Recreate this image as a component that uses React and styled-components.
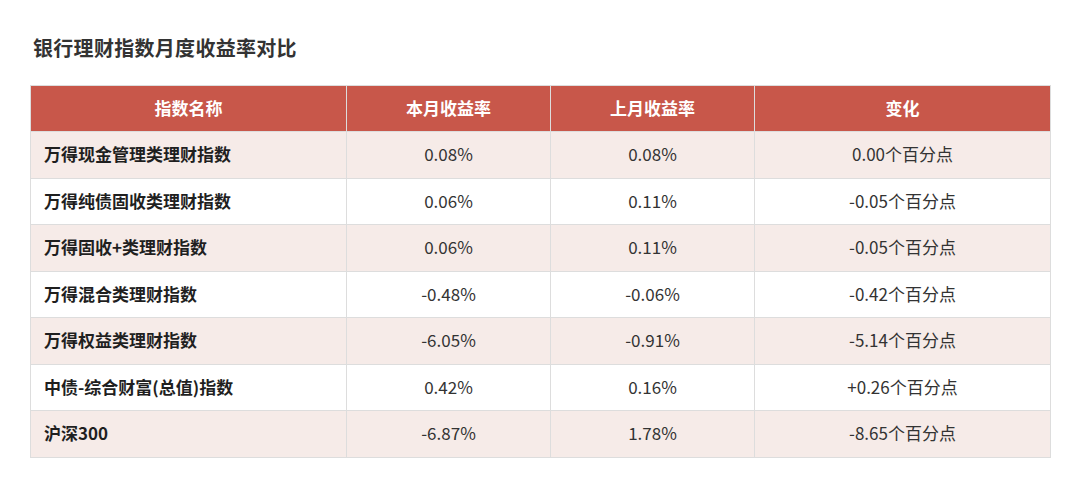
import React from "react";
import styled, { createGlobalStyle } from "styled-components";

const GlobalStyle = createGlobalStyle`
  body {
    margin: 0;
    background: #ffffff;
    font-family: "Noto Sans CJK SC", "Noto Sans", sans-serif;
  }
`;

const Page = styled.div`
  width: 1080px;
  height: 487px;
  padding: 34px 30px 0 30px;
  box-sizing: border-box;
  background: #ffffff;
`;

const Title = styled.h2`
  margin: 0 0 23px 3px;
  font-size: 20px;
  line-height: 28px;
  letter-spacing: 0.3px;
  font-weight: 700;
  color: #333333;
`;

const Table = styled.table`
  width: 1020px;
  border-collapse: collapse;
  table-layout: fixed;
  border: 1px solid #dddddd;
`;

const Th = styled.th`
  background: #c8574a;
  color: #ffffff;
  font-size: 17px;
  font-weight: 700;
  height: 43px;
  padding: 0 0 2px 0;
  text-align: center;
  border: 1px solid #dddddd;
`;

const Row = styled.tr`
  background: ${(p) => (p.$shade ? "#f6ebe8" : "#ffffff")};
`;

const Td = styled.td`
  height: 43.5px;
  padding: 0 ${(p) => (p.$name ? "13px" : "0")} 2px;
  border: 1px solid #dddddd;
  font-size: 17px;
  color: ${(p) => (p.$name ? "#1f1f1f" : "#333333")};
  font-weight: ${(p) => (p.$name ? 700 : 400)};
  text-align: ${(p) => (p.$name ? "left" : "center")};
`;

const rows = [
  ["万得现金管理类理财指数", "0.08%", "0.08%", "0.00个百分点"],
  ["万得纯债固收类理财指数", "0.06%", "0.11%", "-0.05个百分点"],
  ["万得固收+类理财指数", "0.06%", "0.11%", "-0.05个百分点"],
  ["万得混合类理财指数", "-0.48%", "-0.06%", "-0.42个百分点"],
  ["万得权益类理财指数", "-6.05%", "-0.91%", "-5.14个百分点"],
  ["中债-综合财富(总值)指数", "0.42%", "0.16%", "+0.26个百分点"],
  ["沪深300", "-6.87%", "1.78%", "-8.65个百分点"],
];

const App = () => {
  return (
    <Page>
      <GlobalStyle />
      <Title>银行理财指数月度收益率对比</Title>
      <Table>
        <colgroup>
          <col style={{ width: 316 }} />
          <col style={{ width: 204 }} />
          <col style={{ width: 204 }} />
          <col style={{ width: 296 }} />
        </colgroup>
        <thead>
          <tr>
            <Th>指数名称</Th>
            <Th>本月收益率</Th>
            <Th>上月收益率</Th>
            <Th>变化</Th>
          </tr>
        </thead>
        <tbody>
          {rows.map((r, i) => (
            <Row key={i} $shade={i % 2 === 0}>
              <Td $name>{r[0]}</Td>
              <Td>{r[1]}</Td>
              <Td>{r[2]}</Td>
              <Td>{r[3]}</Td>
            </Row>
          ))}
        </tbody>
      </Table>
    </Page>
  );
};

export default App;
